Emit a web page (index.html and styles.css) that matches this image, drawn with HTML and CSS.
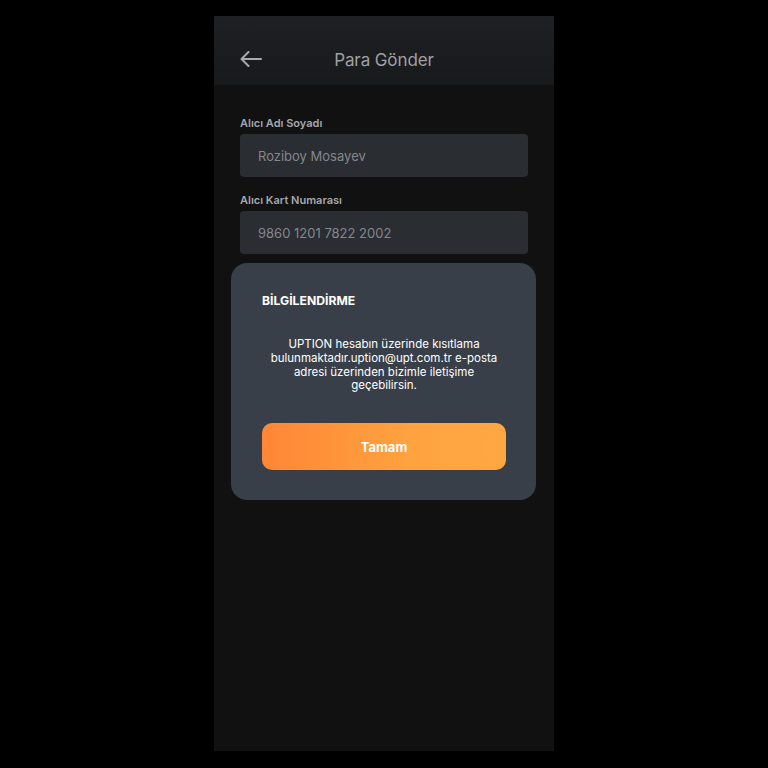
FILE: index.html
```html
<!DOCTYPE html>
<html lang="tr">
<head>
<meta charset="utf-8">
<link rel="stylesheet" href="styles.css">
</head>
<body>
<div class="stage">
  <div class="phone">
    <header class="topbar">
      <svg class="back" width="22" height="16" viewBox="0 0 22 16" fill="none" stroke="#a9a9ab" stroke-width="2" stroke-linecap="round" stroke-linejoin="round">
        <path d="M21 8H1.5M8.5 1L1.5 8l7 7"/>
      </svg>
      <h1 class="title">Para Gönder</h1>
    </header>
    <main class="form">
      <div class="field">
        <label class="label">Alıcı Adı Soyadı</label>
        <div class="input">Roziboy Mosayev</div>
      </div>
      <div class="field">
        <label class="label">Alıcı Kart Numarası</label>
        <div class="input">9860 1201 7822 2002</div>
      </div>
    </main>
    <div class="modal">
      <h2 class="modal-title">BİLGİLENDİRME</h2>
      <p class="modal-text">UPTION hesabın üzerinde kısıtlama bulunmaktadır.uption@upt.com.tr e-posta adresi üzerinden bizimle iletişime geçebilirsin.</p>
      <button class="btn">Tamam</button>
    </div>
  </div>
</div>
</body>
</html>
```

FILE: styles.css
```css
* { box-sizing: border-box; }
html, body { margin: 0; padding: 0; background: #000; }
body { font-family: Inter, "Noto Sans", sans-serif; }
.stage {
  width: 768px;
  height: 768px;
  display: flex;
  justify-content: center;
  padding-top: 16px;
}
.phone {
  position: relative;
  width: 340px;
  height: 735px;
  background: #111112;
  display: flex;
  flex-direction: column;
}
.topbar {
  height: 69px;
  background: linear-gradient(180deg, #1f2023 0%, #18191b 100%);
  display: flex;
  align-items: center;
  position: relative;
  padding: 18px 0 0 26px;
}
.back { display: block; margin-top: -2px; }
.title {
  position: absolute;
  left: 0; right: 0;
  top: 18px; bottom: 0;
  margin: 0;
  display: flex;
  align-items: center;
  justify-content: center;
  font-size: 17px;
  font-weight: 400;
  color: #a0a0a2;
  letter-spacing: -0.1px;
  pointer-events: none;
}
.form {
  padding: 30px 26px 0 26px;
  display: flex;
  flex-direction: column;
  gap: 15px;
}
.field { display: flex; flex-direction: column; gap: 3px; }
.label {
  font-size: 11px;
  font-weight: 600;
  color: #a6a7aa;
  line-height: 16px;
}
.input {
  height: 43px;
  background: #2a2d32;
  border-radius: 4px;
  padding: 0 18px;
  display: flex;
  align-items: center;
  font-size: 13px;
  color: #85878b;
}
.modal {
  position: absolute;
  left: 17px;
  top: 247px;
  width: 305px;
  height: 237px;
  background: #393f48;
  border-radius: 16px;
  padding: 30px 30px 0 31px;
  display: flex;
  flex-direction: column;
}
.modal-title {
  margin: 0;
  font-size: 12.2px;
  font-weight: 700;
  color: #ffffff;
  line-height: 16px;
}
.modal-text {
  margin: 29px 0 0 0;
  width: 234px;
  align-self: center;
  text-align: center;
  font-size: 11.5px;
  line-height: 13.8px;
  color: #ffffff;
}
.btn {
  margin-top: 30px;
  width: 244px;
  height: 47px;
  border: none;
  border-radius: 10px;
  background: linear-gradient(90deg, #ff8636 0%, #ffa23f 60%, #ffa843 100%);
  color: #fff;
  font-family: inherit;
  font-size: 13px;
  font-weight: 700;
}
```
